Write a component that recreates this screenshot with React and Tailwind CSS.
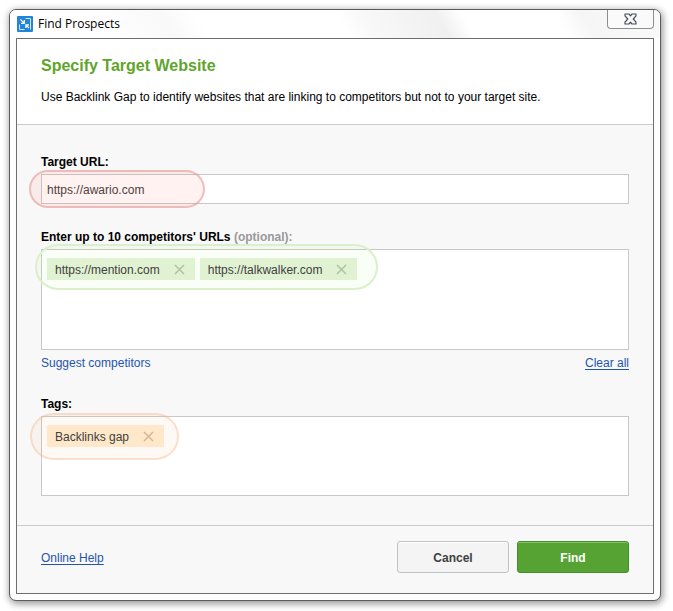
import { useState } from 'react';

function AppIcon() {
  return (
    <svg width="16" height="16" viewBox="0 0 16 16" fill="none" aria-hidden="true">
      <rect width="16" height="16" rx="1" fill="#2484d8" />
      <path d="M8.500 2.500h5v11M7.500 13.500h-5v-5" stroke="#cfe6f9" strokeWidth="1" />
      <path d="M3.500 3.500L7 7M4 7.300h3.300V4" stroke="#fff" strokeWidth="1.200" />
      <path d="M12 12L9.200 9.200M12 8.900H8.900V12" stroke="#fff" strokeWidth="1.200" />
    </svg>
  );
}

function CloseIcon() {
  return (
    <svg width="13" height="12" viewBox="0 0 13 12" aria-hidden="true">
      <path
        d="M1 1h4l1.500 1.800L8 1h4v1.800L9.300 6 12 9.200V11H8L6.500 9.200 5 11H1V9.200L3.700 6 1 2.800z"
        fill="#f7f7f7"
        stroke="#4a4f5c"
        strokeWidth="1.200"
        strokeLinejoin="round"
      />
    </svg>
  );
}

function Chip({ label, onRemove, className, iconClass }) {
  return (
    <li className={`flex h-[22px] items-center pr-[10px] pl-2 ${className}`}>
      <span className="pt-0.5 text-[#404040]">{label}</span>
      <button type="button" onClick={onRemove} aria-label={`Remove ${label}`} className={`ml-[14px] ${iconClass}`}>
        <svg width="11" height="11" viewBox="0 0 11 11" fill="none" stroke="currentColor" strokeWidth="1.5">
          <path d="M1 1l9 9M10 1l-9 9" />
        </svg>
      </button>
    </li>
  );
}

export default function App() {
  const [url, setUrl] = useState('https://awario.com');
  const [competitors, setCompetitors] = useState(['https://mention.com', 'https://talkwalker.com']);
  const [tags, setTags] = useState(['Backlinks gap']);

  return (
    <div className="min-h-screen bg-white pt-[9px] pr-3 pb-[9px] pl-[9px] font-['Liberation_Sans',Arial,sans-serif] text-xs text-black">
      <div className="overflow-hidden rounded-[7px] border border-[#5c5c5c] bg-[#fdfdfd] shadow-[1px_2px_7px_1px_rgba(0,0,0,0.4)]">
        <div className="flex h-7 items-start justify-between bg-[linear-gradient(60deg,#fff_14%,#f9f9f9_25%,#fff_30%,#fff_51%,#f8f8f8_55%,#f0f0f0_66%,#fff_70%,#fff_84%,#f5f5f5_88%,#fafafa_100%)] pr-[6px] pl-[7px]">
          <div className="flex h-7 items-center gap-[5px]">
            <AppIcon />
            <span className="font-['Open_Sans','Noto_Sans',sans-serif]">Find Prospects</span>
          </div>
          <button
            type="button"
            aria-label="Close"
            className="flex h-[19px] w-[47px] items-center justify-center rounded-b-[4px] border border-t-0 border-[#8e8e8e] bg-[#fafafa]"
          >
            <CloseIcon />
          </button>
        </div>

        <form className="mx-[6px] mb-[6px] border border-[#6e6e6e] bg-[#f8f8f8]" onSubmit={(e) => e.preventDefault()}>
          <header className="border-b border-[#cbcbcb] bg-white px-6 pt-[17px] pb-[19px]">
            <h1 className="text-base leading-5 font-bold text-[#5fa52c]">Specify Target Website</h1>
            <p className="mt-[13px] leading-4">
              Use Backlink Gap to identify websites that are linking to competitors but not to your target site.
            </p>
          </header>

          <div className="flex flex-col gap-6 px-6 pt-7 pb-[29px]">
            <div>
              <label htmlFor="target" className="block leading-[18px] font-bold">Target URL:</label>
              <div className="relative mt-[3px]">
                <input
                  id="target"
                  value={url}
                  onChange={(e) => setUrl(e.target.value)}
                  className="block h-[30px] w-full border border-[#c8c8c8] bg-white px-[5px] pt-0.5 text-[#404040] outline-none"
                />
                <div className="pointer-events-none absolute -top-1 -left-3 h-[38px] w-[176px] rounded-full border-2 border-[#e08b8b]/50 bg-[#ff5a46]/8"></div>
              </div>
            </div>

            <div>
              <h2 className="leading-[18px] font-bold">
                Enter up to 10 competitors' URLs <span className="text-[#999]">(optional):</span>
              </h2>
              <div className="relative mt-[3px] h-[101px] border border-[#c8c8c8] bg-white">
                <div className="pointer-events-none absolute -top-[6px] -left-[7px] h-[46px] w-[343px] rounded-full border-2 border-[#dcefcb] bg-[#a0e664]/6"></div>
                <ul className="relative flex flex-wrap gap-[5px] px-[5px] py-2">
                  {competitors.map((item) => (
                    <Chip
                      key={item}
                      label={item}
                      className="bg-[#e1f2d3]"
                      iconClass="text-[#adc49c]"
                      onRemove={() => setCompetitors(competitors.filter((c) => c !== item))}
                    />
                  ))}
                </ul>
              </div>
              <div className="mt-[5px] flex justify-between leading-4 text-[#1f55ad]">
                <a href="#suggest">Suggest competitors</a>
                <a href="#clear" className="underline underline-offset-2" onClick={() => setCompetitors([])}>Clear all</a>
              </div>
            </div>

            <div>
              <h2 className="leading-[18px] font-bold">Tags:</h2>
              <div className="relative mt-[3px] h-20 border border-[#c8c8c8] bg-white">
                <div className="pointer-events-none absolute -top-1 -left-3 h-[47px] w-[149px] rounded-full border-2 border-[#f5b98c]/40 bg-[#ff9650]/6"></div>
                <ul className="relative flex flex-wrap gap-[5px] px-[5px] py-2">
                  {tags.map((tag) => (
                    <Chip
                      key={tag}
                      label={tag}
                      className="bg-[#ffe7ca]"
                      iconClass="text-[#d4b696]"
                      onRemove={() => setTags(tags.filter((t) => t !== tag))}
                    />
                  ))}
                </ul>
              </div>
            </div>
          </div>

          <footer className="flex items-center justify-between border-t border-[#cbcbcb] px-6 pt-[15px] pb-5">
            <a href="#help" className="pt-0.5 text-[#1f55ad] underline underline-offset-2">Online Help</a>
            <div className="flex gap-2 font-bold">
              <button
                type="button"
                className="h-8 w-28 rounded-[3px] border border-[#c2c2c2] bg-[#f4f4f4] pt-0.5 text-[#404040] shadow-[inset_0_1px_0_#fff]"
              >
                Cancel
              </button>
              <button
                type="submit"
                className="h-8 w-28 rounded-[3px] border border-[#45902a] bg-[#56a333] pt-0.5 text-white shadow-[inset_0_1px_0_#86c167]"
              >
                Find
              </button>
            </div>
          </footer>
        </form>
      </div>
    </div>
  );
}
